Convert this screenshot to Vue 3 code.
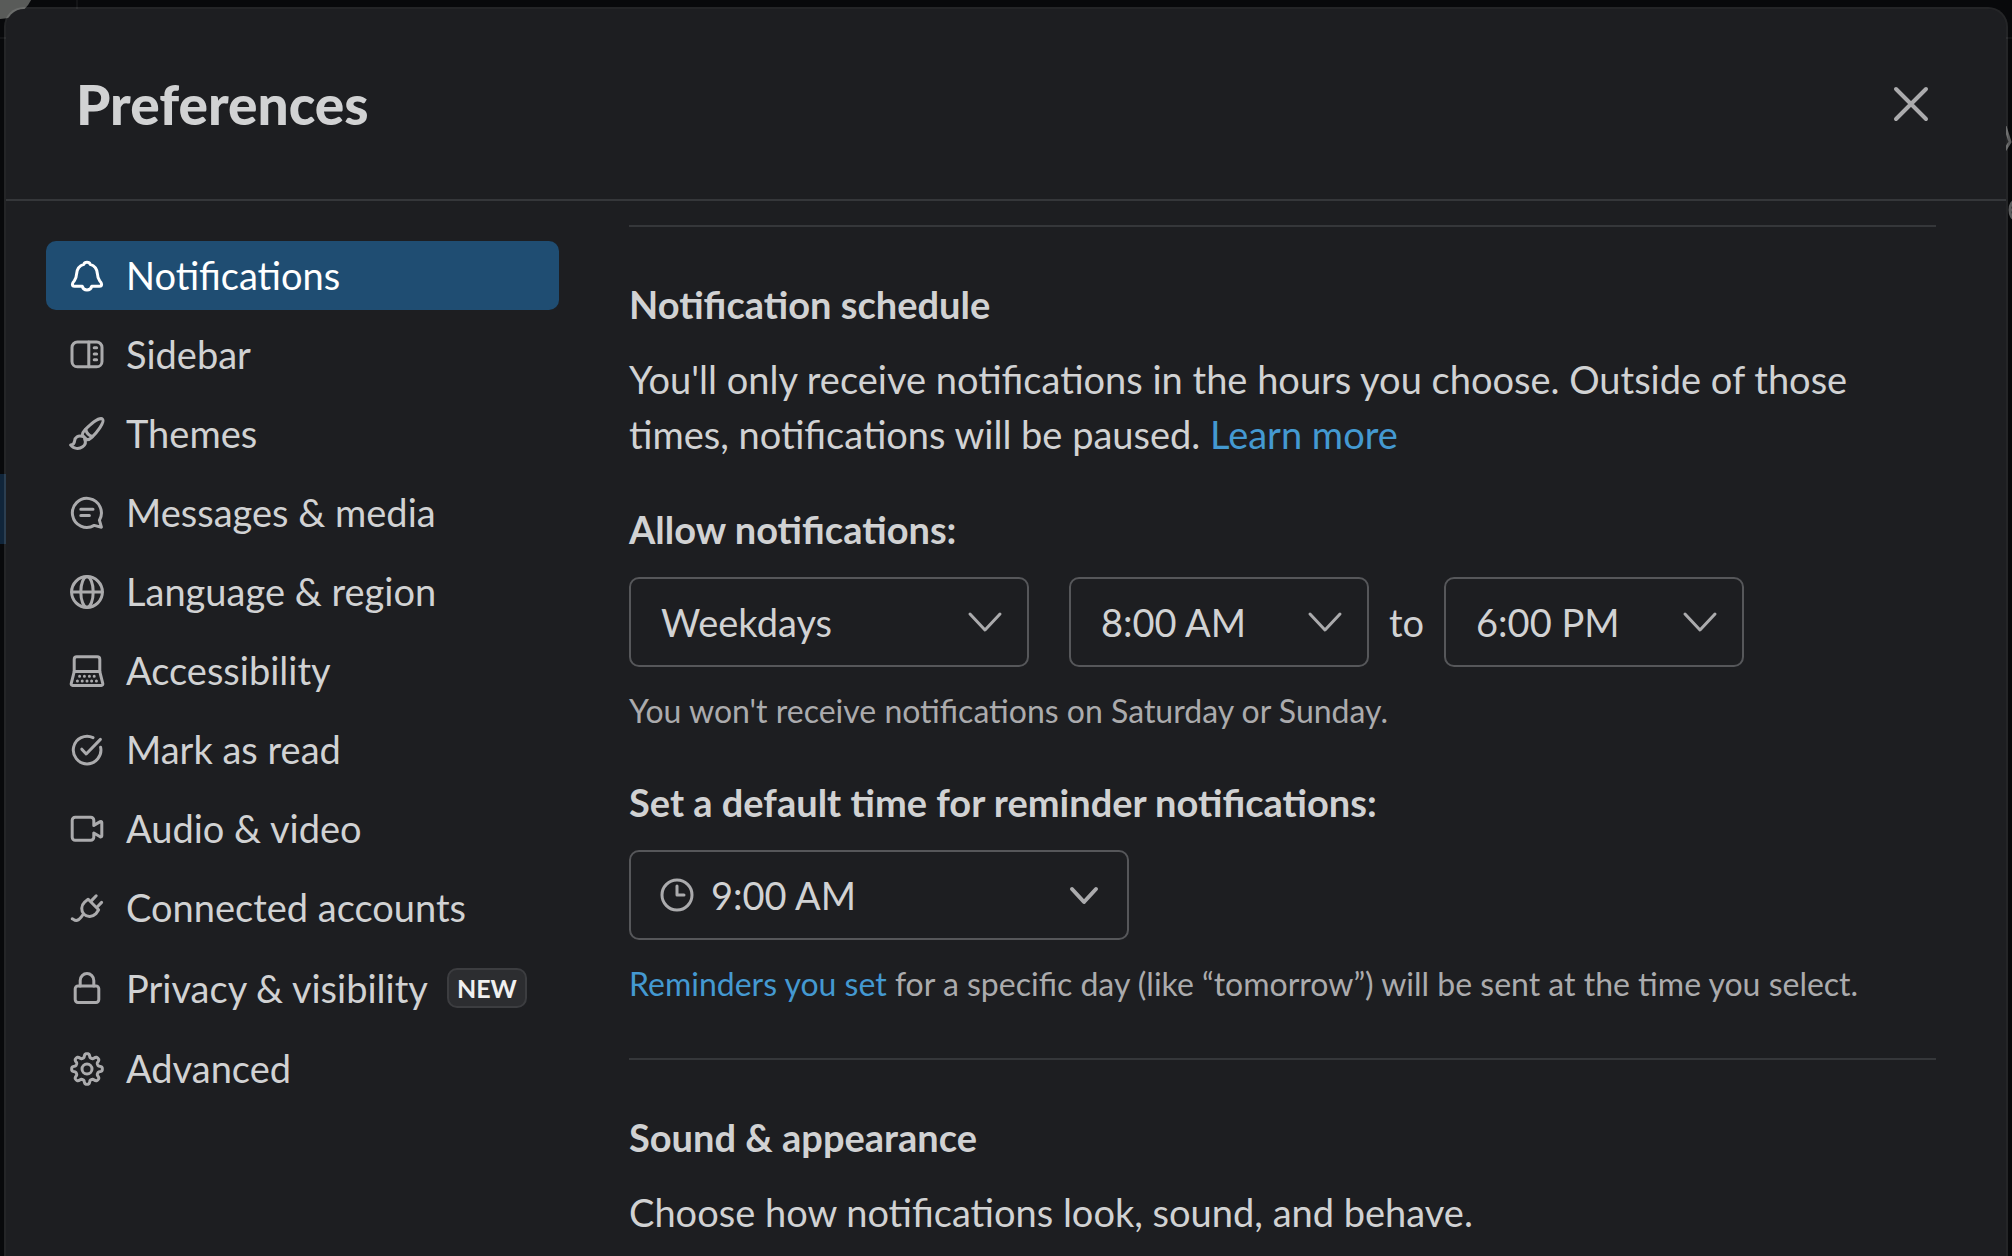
<script setup>
import { ref } from 'vue'

// Outline of an eight-toothed cog, centred in a 20 x 20 box.
function cogPath() {
  const steps = 192
  let d = ''
  for (let i = 0; i < steps; i++) {
    const a = (i / steps) * Math.PI * 2
    const wave = Math.tanh(2 * Math.cos(8 * a)) / Math.tanh(2)
    const r = 6.7 + 0.95 * wave
    d += (i ? 'L' : 'M') + (10 + r * Math.sin(a)).toFixed(2) + ' ' + (10 - r * Math.cos(a)).toFixed(2)
  }
  return d + 'z'
}

const dots = [
  [6.3, 12.6], [8.7, 12.6], [11.2, 12.6], [13.6, 12.6],
  [5.2, 15], [7.6, 15], [10, 15], [12.3, 15], [14.7, 15],
].map(([x, y]) => `M${x} ${y}h.01`).join('')

const sections = [
  {
    label: 'Notifications',
    paths: ['M8.4 4.2c.2-.7.8-1.1 1.6-1.1s1.4.4 1.6 1.1c2.1.6 3.4 2.4 3.6 4.7.1 2 .5 2.8 1.2 3.6.6.6.9 1 .9 1.6 0 .7-.4 1-1.1 1h-3.8c-.3 1.2-1.1 1.9-2.4 1.9s-2.1-.7-2.4-1.9H3.8c-.7 0-1.1-.3-1.1-1 0-.6.3-1 .9-1.6.7-.8 1.1-1.6 1.2-3.6.2-2.3 1.5-4.1 3.6-4.7z'],
  },
  {
    label: 'Sidebar',
    paths: ['M5.2 3.5h9.6a2.7 2.7 0 0 1 2.7 2.7v7a2.7 2.7 0 0 1-2.7 2.7H5.2a2.7 2.7 0 0 1-2.7-2.7v-7a2.7 2.7 0 0 1 2.7-2.7z', 'M10.9 3.5v12.4', 'M13.6 6.4h1.2M13.6 9.5h1.2M13.6 12.4h1.2'],
  },
  {
    label: 'Themes',
    paths: ['M17.8 2.6c.6.6-.2 2.5-1.4 4.3-1.2 1.8-2.8 3.6-4 4.8-.7.7-1.5 1.2-2.4 1.2l-2.4-2.3c0-.9.5-1.8 1.2-2.5 1.6-1.6 3-3 4.7-4.2 1.7-1.2 3.7-1.9 4.3-1.3z', 'M9.4 7.6c.3 1.9 1.4 3.1 3.3 3.6', 'M7.6 11.2c-2-.7-3.6.4-3.8 2.2-.1 1.2-.9 2-2 2.1 1.4 2 4.2 2.2 6 .9 1.4-1 1.7-2.5 1-3.9'],
  },
  {
    label: 'Messages & media',
    paths: ['M16.2 13.6A7.25 7.25 0 1 0 13.6 16.2L17.2 17.1z', 'M6.9 8.1h6.1M6.9 11.2h4.3'],
  },
  {
    label: 'Language & region',
    paths: ['M2.3 10a7.7 7.7 0 1 0 15.4 0a7.7 7.7 0 1 0-15.4 0z', 'M6.9 10c0 4.3 1.4 7.6 3.1 7.6s3.1-3.3 3.1-7.6-1.4-7.6-3.1-7.6-3.1 3.3-3.1 7.6z', 'M2.4 10h15.2'],
  },
  {
    label: 'Accessibility',
    paths: ['M3.6 10.3V4.2c0-.8.5-1.3 1.3-1.3h10.2c.8 0 1.3.5 1.3 1.3v6.1z', 'M3.6 10.3l-1.5 6c-.1.5.2.9.7.9h14.4c.5 0 .8-.4.7-.9l-1.5-6', dots],
  },
  {
    label: 'Mark as read',
    paths: ['M13 3.8A6.9 6.9 0 1 0 16.8 8.6', 'M7.4 9.6l2.2 2.4 7.1-7.3'],
  },
  {
    label: 'Audio & video',
    paths: ['M13.4 8.2l3.2-1.9c.4-.2.8 0 .8.5v6.6c0 .5-.4.7-.8.5l-3.2-1.9v2.1a1.5 1.5 0 0 1-1.5 1.5H4.1a1.5 1.5 0 0 1-1.5-1.5V5.6a1.5 1.5 0 0 1 1.5-1.5h7.8a1.5 1.5 0 0 1 1.5 1.5z'],
  },
  {
    label: 'Connected accounts',
    paths: ['M10.6 5.6l5.2 5.3-1.3 1.9c-1.8 1.8-4.4 1.9-6 .3s-1.5-4.3.3-6z', 'M12.4 6.2l2.2-2.3M15.2 9.4l2.1-2.2', 'M8.2 13.2c-1.2 1.1-1.8 3-3.6 3-1 0-1.5-.8-2-.8'],
  },
  {
    label: 'Privacy & visibility',
    badge: 'NEW',
    paths: ['M5.5 9h9a1.4 1.4 0 0 1 1.4 1.4v5.4a1.4 1.4 0 0 1-1.4 1.4h-9a1.4 1.4 0 0 1-1.4-1.4v-5.4A1.4 1.4 0 0 1 5.5 9z', 'M6.6 9V6.2a3.4 3.4 0 0 1 6.8 0V9'],
  },
  {
    label: 'Advanced',
    paths: [cogPath(), 'M7.5 10a2.5 2.5 0 1 0 5 0a2.5 2.5 0 1 0-5 0z'],
  },
]

const active = ref('Notifications')
const days = ref('Weekdays')
const from = ref('8:00 AM')
const until = ref('6:00 PM')
const reminder = ref('9:00 AM')

const dayOptions = ['Every day', 'Weekdays', 'Custom']
const hours = ['8:00 AM', '9:00 AM', '12:00 PM', '6:00 PM']
</script>

<template>
  <div class="page">
    <div class="behind" aria-hidden="true">
      <span class="avatar"></span>
      <span class="rail"></span>
      <span class="rule"></span>
      <span class="row"></span>
      <svg class="sliver" viewBox="0 0 8 100">
        <path d="M1 0l5 16-5 8" />
        <path d="M12 75c-4 0-6 4-6 9s2 9 6 9M6 84h6" />
      </svg>
    </div>

    <div class="modal" role="dialog" aria-labelledby="title">
      <header class="head">
        <h1 id="title">Preferences</h1>
        <button class="close" type="button" aria-label="Close">
          <svg viewBox="0 0 40 40"><path d="M5 5l30 30M35 5L5 35" /></svg>
        </button>
      </header>

      <div class="body">
        <nav class="nav" aria-label="Preference sections">
          <button
            v-for="s in sections"
            :key="s.label"
            type="button"
            class="item"
            :class="{ active: s.label === active, tall: s.badge }"
            @click="active = s.label"
          >
            <svg class="icon" viewBox="0 0 20 20"><path v-for="p in s.paths" :key="p" :d="p" /></svg>
            <span>{{ s.label }}</span>
            <span v-if="s.badge" class="badge">{{ s.badge }}</span>
          </button>
        </nav>

        <main class="content">
          <section>
            <h2>Notification schedule</h2>
            <p class="lead">
              You'll only receive notifications in the hours you choose. Outside of those times,
              notifications will be paused. <a href="#learn">Learn more</a>
            </p>

            <div class="field">
              <label class="label" for="days">Allow notifications:</label>
              <div class="controls">
                <div class="select days">
                  <select id="days" v-model="days">
                    <option v-for="o in dayOptions" :key="o">{{ o }}</option>
                  </select>
                  <svg class="chevron" viewBox="0 0 40 40"><path d="M5 12l15 16 15-16" /></svg>
                </div>
                <div class="range">
                  <div class="select hour">
                    <select v-model="from" aria-label="From">
                      <option v-for="o in hours" :key="o">{{ o }}</option>
                    </select>
                    <svg class="chevron" viewBox="0 0 40 40"><path d="M5 12l15 16 15-16" /></svg>
                  </div>
                  <span>to</span>
                  <div class="select hour">
                    <select v-model="until" aria-label="Until">
                      <option v-for="o in hours" :key="o">{{ o }}</option>
                    </select>
                    <svg class="chevron" viewBox="0 0 40 40"><path d="M5 12l15 16 15-16" /></svg>
                  </div>
                </div>
              </div>
              <p class="hint">You won't receive notifications on Saturday or Sunday.</p>
            </div>

            <div class="field">
              <label class="label" for="reminder">Set a default time for reminder notifications:</label>
              <div class="select reminder">
                <svg class="clock" viewBox="0 0 40 40"><circle cx="20" cy="20" r="15" /><path d="M20 11v9h7" /></svg>
                <select id="reminder" v-model="reminder">
                  <option v-for="o in hours" :key="o">{{ o }}</option>
                </select>
                <svg class="chevron bold" viewBox="0 0 40 40"><path d="M7 14l12 13 12-13" /></svg>
              </div>
              <p class="hint">
                <a href="#reminders">Reminders you set</a> for a specific day (like “tomorrow”) will be sent at the time you select.
              </p>
            </div>
          </section>

          <section>
            <h2>Sound &amp; appearance</h2>
            <p class="lead">Choose how notifications look, sound, and behave.</p>
          </section>
        </main>
      </div>
    </div>
  </div>
</template>

<style>
body {
  margin: 0;
  background: #08090b;
}
</style>

<style scoped>
.page {
  position: relative;
  box-sizing: border-box;
  display: flex;
  height: 100vh;
  padding: 7px 4px 0;
  overflow: hidden;
  background: #08090b;
  color: #d1d2d3;
  font-family: Lato, "Liberation Sans", sans-serif;
  font-size: 38px;
  line-height: 55px;
}

h1,
h2,
p {
  margin: 0;
}

a {
  color: #4499d1;
  text-decoration: none;
}

svg {
  fill: none;
  stroke: #ababad;
  stroke-linecap: round;
  stroke-linejoin: round;
}

/* Dimmed workspace showing around the dialog */
.behind span,
.sliver {
  position: absolute;
}

.avatar {
  top: -51px;
  left: -35px;
  width: 70px;
  height: 70px;
  border-radius: 50%;
  background: #595b59;
}

.rail {
  top: 0;
  left: 76px;
  width: 2px;
  height: 9px;
  background: #131416;
}

.rule {
  top: 37px;
  left: 0;
  right: 0;
  height: 2px;
  background: #131416;
}

.row {
  top: 474px;
  left: 0;
  width: 8px;
  height: 70px;
  background: #10253a;
}

.sliver {
  top: 126px;
  right: 0;
  width: 8px;
  height: 100px;
  stroke: #5c5d5e;
  stroke-width: 3px;
}

.modal {
  position: relative;
  flex: 1;
  min-width: 0;
  border: 2px solid rgba(232, 232, 232, 0.13);
  border-bottom: 0;
  border-radius: 20px 20px 0 0;
  background: #1d1e21;
  background-clip: padding-box;
}

.head {
  display: flex;
  align-items: center;
  justify-content: space-between;
  height: 190px;
  padding: 0 70px;
  border-bottom: 2px solid #35373a;
}

h1 {
  font-family: "Lato Black", Lato, "Liberation Sans", sans-serif;
  font-size: 55px;
  line-height: 70px;
  font-weight: 900;
}

.close {
  display: flex;
  padding: 5px;
  border: 0;
  background: none;
}

.close svg {
  width: 40px;
  height: 40px;
  stroke-width: 4px;
}

.body {
  display: flex;
  gap: 70px;
  padding: 0 70px 0 40px;
}

.nav {
  display: flex;
  flex: 0 0 513px;
  flex-direction: column;
  gap: 10px;
  padding-top: 40px;
}

.item {
  display: flex;
  align-items: center;
  gap: 19px;
  height: 69px;
  padding: 0 21px;
  border: 0;
  border-radius: 10px;
  background: none;
  color: inherit;
  font: inherit;
  white-space: nowrap;
}

.item.tall {
  height: 72px;
}

.item.active {
  background: #1f4d72;
  color: #fff;
}

.item.active .icon {
  stroke: #fff;
}

.icon {
  flex: none;
  width: 40px;
  height: 40px;
  stroke-width: 1.5px;
}

.badge {
  box-sizing: border-box;
  height: 40px;
  padding: 0 8px;
  border: 2px solid #3c3d40;
  border-radius: 10px;
  background: #2c2d30;
  color: #f0f0f0;
  font-size: 25px;
  line-height: 36px;
  font-weight: 700;
}

.content {
  flex: 1;
  min-width: 0;
  padding-top: 24px;
}

section {
  display: flex;
  flex-direction: column;
  padding: 50px 0;
  border-top: 2px solid #35373a;
}

h2,
.label {
  font-size: 38px;
  line-height: 55px;
  font-weight: 700;
}

.lead {
  margin-top: 20px;
}

.field {
  display: flex;
  flex-direction: column;
  align-items: flex-start;
  gap: 20px;
  margin-top: 40px;
}

.controls {
  display: flex;
  gap: 40px;
}

.range {
  display: flex;
  align-items: center;
  gap: 20px;
}

.select {
  position: relative;
  height: 90px;
}

.days {
  width: 400px;
}

.hour {
  width: 300px;
}

.reminder {
  width: 500px;
}

select {
  box-sizing: border-box;
  width: 100%;
  height: 100%;
  padding: 0 80px 0 30px;
  border: 2px solid #56575a;
  border-radius: 10px;
  background: none;
  color: inherit;
  font: inherit;
  appearance: none;
}

.reminder select {
  padding-left: 80px;
}

.chevron,
.clock {
  position: absolute;
  top: 25px;
  width: 40px;
  height: 40px;
  stroke-width: 3px;
  pointer-events: none;
}

.chevron {
  right: 24px;
}

.chevron.bold {
  stroke-width: 4px;
}

.clock {
  left: 28px;
}

.hint {
  color: #ababad;
  font-size: 32px;
  line-height: 48px;
}
</style>
